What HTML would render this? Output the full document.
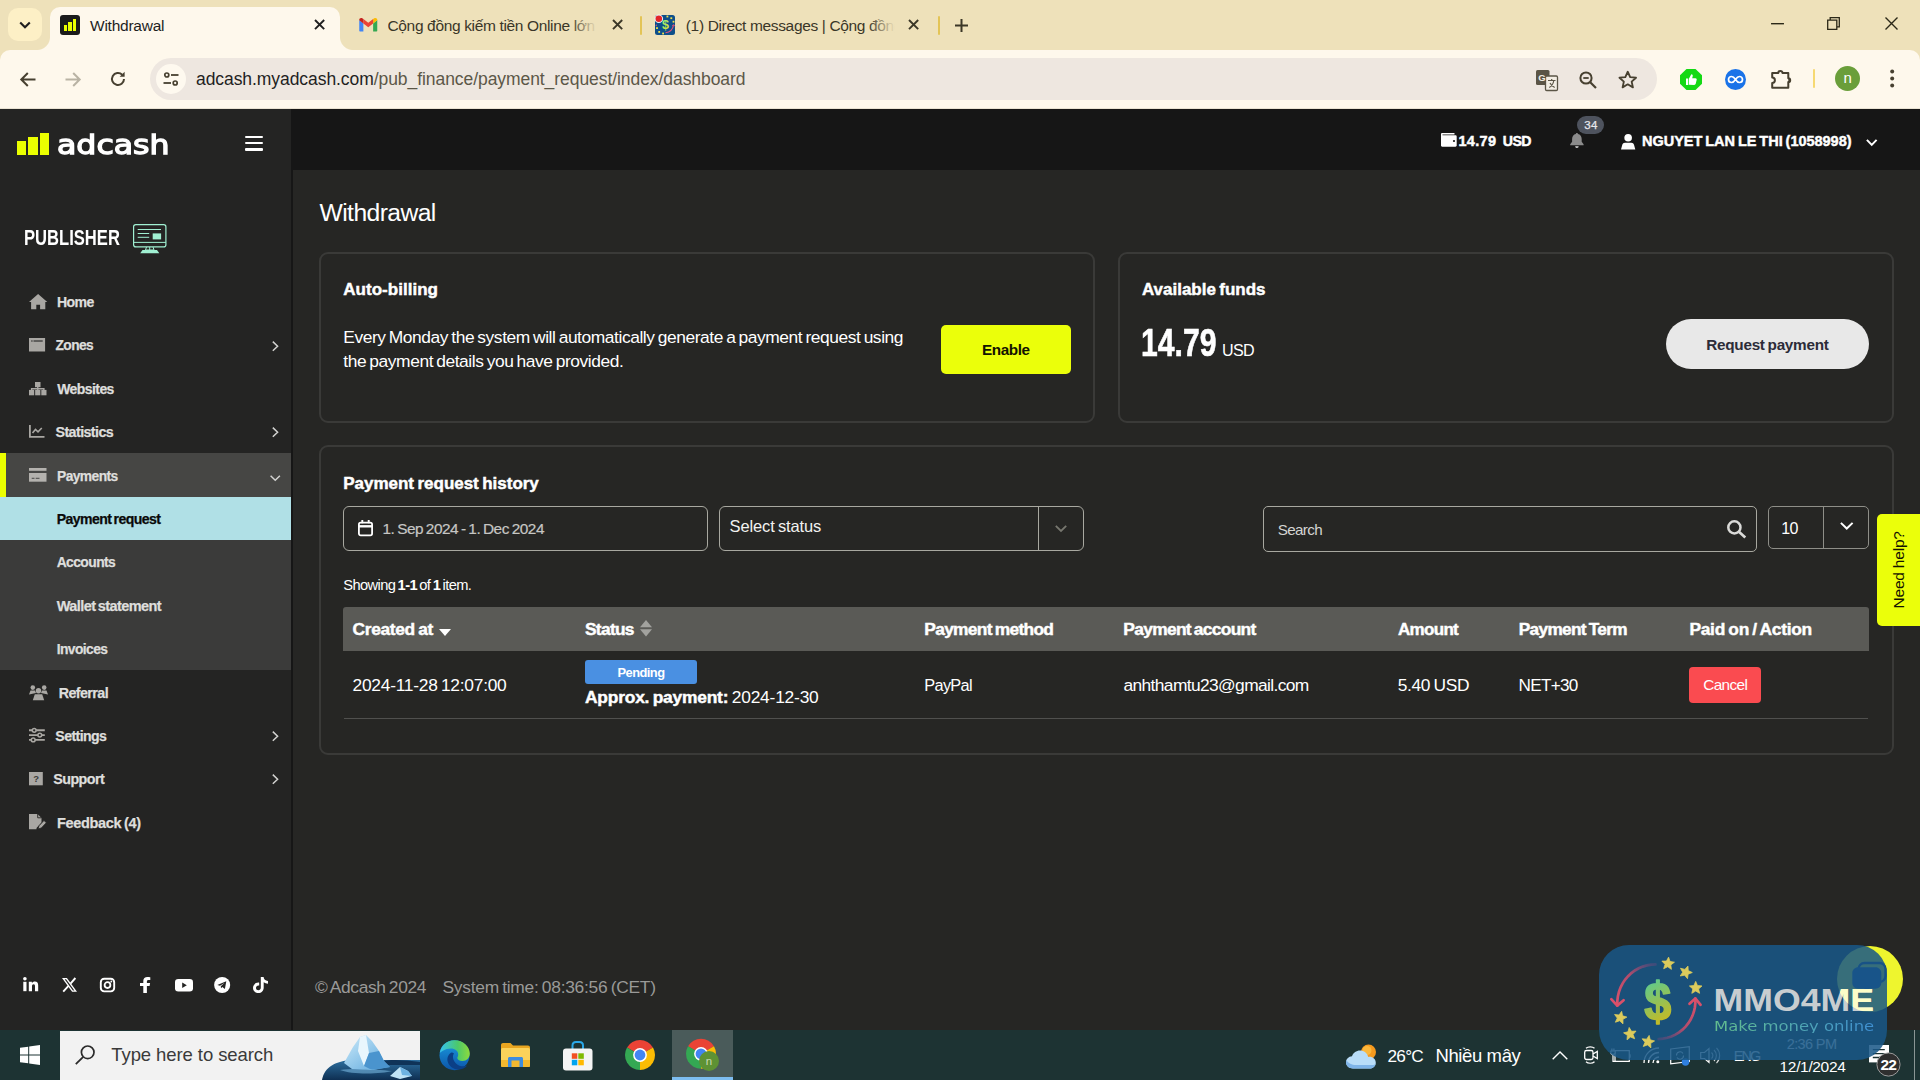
<!DOCTYPE html>
<html lang="en"><head><meta charset="utf-8"><title>Withdrawal</title>
<style>
*{margin:0;padding:0;box-sizing:border-box}
html,body{width:1920px;height:1080px;overflow:hidden;background:#262624}
body{position:relative;font-family:"Liberation Sans",sans-serif}
.b{position:absolute}
.t{position:absolute;white-space:pre;transform-origin:0 50%}
svg{position:absolute;overflow:visible}
</style></head>
<body>
<div class="b" style="left:0px;top:0px;width:1920px;height:62px;background:#EEE1BA;"></div>
<div class="b" style="left:8px;top:8px;width:34px;height:33px;background:#FDF0C6;border-radius:10px;"></div>
<div class="b" style="left:0px;top:50px;width:1920px;height:59px;background:#FEF8EC;border-radius:10px 10px 0 0;"></div>
<div class="b" style="left:0px;top:109px;width:291px;height:921px;background:#242423;"></div>
<div class="b" style="left:291px;top:109px;width:2px;height:921px;background:#161616;"></div>
<div class="b" style="left:293px;top:109px;width:1627px;height:921px;background:#262624;"></div>
<div class="b" style="left:50px;top:7px;width:290px;height:44px;background:#FEF8EC;border-radius:10px 10px 0 0;"></div>
<div class="b" style="left:37px;top:37px;width:13px;height:13px;background:radial-gradient(circle at 0 0, transparent 12.5px, #FEF8EC 13.5px);"></div>
<div class="b" style="left:340px;top:37px;width:13px;height:13px;background:radial-gradient(circle at 100% 0, transparent 12.5px, #FEF8EC 13.5px);"></div>
<div class="b" style="left:150px;top:58px;width:1507px;height:42px;background:#EEE7E0;border-radius:21px;"></div>
<div class="b" style="left:640px;top:16px;width:2px;height:19px;background:#E3C456;border-radius:1px;"></div>
<div class="b" style="left:938px;top:16px;width:2px;height:19px;background:#E3C456;border-radius:1px;"></div>
<div class="b" style="left:1813px;top:69px;width:2px;height:19px;background:#F6D972;border-radius:1px;"></div>
<div class="b" style="left:1835px;top:65.5px;width:25px;height:25px;background:#6A9E3A;border-radius:50%;"></div>
<div class="b" style="left:0px;top:108px;width:1920px;height:1px;background:#E9E2D2;"></div>
<div class="b" style="left:0px;top:453px;width:291px;height:44px;background:#464644;"></div>
<div class="b" style="left:0px;top:497px;width:291px;height:173px;background:#3B3B3A;"></div>
<div class="b" style="left:291px;top:109px;width:1629px;height:61px;background:#161616;"></div>
<div class="b" style="left:318.8px;top:251.8px;width:776px;height:171px;border:2px solid #3A3A38;border-radius:9px;"></div>
<div class="b" style="left:1117.8px;top:251.8px;width:776.3px;height:171px;border:2px solid #3A3A38;border-radius:9px;"></div>
<div class="b" style="left:318.8px;top:444.8px;width:1575.3px;height:310px;border:2px solid #3A3A38;border-radius:9px;"></div>
<div class="b" style="left:0px;top:1030px;width:1920px;height:50px;background:#1D3333;"></div>
<div class="b" style="left:156px;top:64px;width:30px;height:30px;background:#FEF9EF;border-radius:15px;"></div>
<div class="b" style="left:60px;top:15px;width:20px;height:20px;background:#1B1B1B;border-radius:3px;"></div>
<div class="b" style="left:655px;top:15px;width:20px;height:20px;background:#0E4F8A;border-radius:2.5px;"></div>
<div class="b" style="left:0px;top:453px;width:6px;height:44px;background:#EBFF00;"></div>
<div class="b" style="left:0px;top:497px;width:291px;height:43px;background:#B0E0E6;"></div>
<div class="b" style="left:17px;top:140.5px;width:9.4px;height:14.5px;background:#EBFF00;"></div>
<div class="b" style="left:28.3px;top:136.7px;width:9.7px;height:18.3px;background:#EBFF00;"></div>
<div class="b" style="left:40px;top:133px;width:9.4px;height:22px;background:#EBFF00;"></div>
<div class="b" style="left:244.5px;top:136px;width:18.5px;height:2.2px;background:#fff;border-radius:1px;"></div>
<div class="b" style="left:244.5px;top:142.2px;width:18.5px;height:2.2px;background:#fff;border-radius:1px;"></div>
<div class="b" style="left:244.5px;top:148.4px;width:18.5px;height:2.2px;background:#fff;border-radius:1px;"></div>
<div class="b" style="left:941px;top:325px;width:130.3px;height:49.3px;background:#EBFF0A;border-radius:5px;"></div>
<div class="b" style="left:1665.8px;top:318.8px;width:203.5px;height:50.5px;background:#E8E8E8;border-radius:26px;"></div>
<div class="b" style="left:343px;top:506.3px;width:365px;height:44.5px;border:1px solid #A8A8A0;border-radius:6px;"></div>
<div class="b" style="left:719.3px;top:506.3px;width:364.5px;height:44.5px;border:1px solid #A8A8A0;border-radius:6px;"></div>
<div class="b" style="left:1038px;top:507px;width:1px;height:43.5px;background:#A8A8A0;"></div>
<div class="b" style="left:1263px;top:506.3px;width:494px;height:45.5px;border:1px solid #A8A8A0;border-radius:5px;"></div>
<div class="b" style="left:1768px;top:506.3px;width:101px;height:42.5px;border:1px solid #8E8E88;border-radius:5px;"></div>
<div class="b" style="left:1823px;top:507px;width:1px;height:41px;background:#8E8E88;"></div>
<div class="b" style="left:343px;top:607px;width:1526px;height:44px;background:#5A5A56;border-radius:3px 3px 0 0;"></div>
<div class="b" style="left:344px;top:718px;width:1524px;height:1px;background:#50504E;"></div>
<div class="b" style="left:585px;top:660px;width:112px;height:24px;background:#4A90E2;border-radius:3px;"></div>
<div class="b" style="left:1689px;top:667.2px;width:72px;height:35.5px;background:#FA4B50;border-radius:4px;"></div>
<div class="b" style="left:60px;top:1030.5px;width:360px;height:49.5px;background:#F2F2F2;"></div>
<div class="b" style="left:672px;top:1030px;width:61px;height:50px;background:#4A5B5A;"></div>
<div class="b" style="left:64px;top:25px;width:3.4px;height:6px;background:#EBFF00;"></div>
<div class="b" style="left:68.4px;top:22px;width:3.4px;height:9px;background:#EBFF00;"></div>
<div class="b" style="left:72.8px;top:19px;width:3.4px;height:12px;background:#EBFF00;"></div>
<div class="b" style="left:1876.5px;top:514px;width:44px;height:112px;background:#EBFF0A;border-radius:5px 0 0 5px;"></div>
<div class="b" style="left:1577px;top:116.3px;width:27px;height:17.7px;background:#4E535E;border-radius:9px;"></div>
<div class="b" style="left:672px;top:1077px;width:61px;height:3px;background:#7DBDF0;"></div>
<div class="b" style="left:1914px;top:1030px;width:1px;height:50px;background:#8A9594;"></div>
<svg style="left:655px;top:15px" width="20" height="20" viewBox="0 0 20 20" ><defs><linearGradient id="fv" x1="0" y1="0" x2="1" y2="1"><stop offset="0" stop-color="#7CF09A"/><stop offset="1" stop-color="#F0E018"/></linearGradient></defs><text x="10.400" y="14" text-anchor="middle" font-family="Liberation Sans,sans-serif" font-weight="700" font-size="12.500" fill="url(#fv)">$</text><rect x="11.500" y=".6" width="1.800" height="1.800" fill="#F2E14A"/><rect x="15.400" y="2.300" width="1.800" height="1.800" fill="#F2E14A"/><rect x="17.600" y="5.800" width="1.800" height="1.800" fill="#F2E14A"/><rect x="1.100" y="12.200" width="1.800" height="1.800" fill="#F2E14A"/><rect x="3.300" y="16" width="1.800" height="1.800" fill="#F2E14A"/><rect x="7.200" y="17.600" width="1.800" height="1.800" fill="#F2E14A"/><path d="M10.500 17.800C14.500 17.300 17.800 14.500 18.500 10.200" stroke="#E0507A" stroke-width="1.100" fill="none"/><path d="M17.300 11L18.600 9.600L19.700 11.200" stroke="#E0507A" stroke-width="1" fill="none"/><path d="M.3 10.200L1.800 9.200V11.400Z" fill="#E0507A"/><circle cx="3.800" cy="3.800" r="4.300" fill="#EEF4F8"/><circle cx="3.800" cy="3.800" r="3.300" fill="#E22428"/></svg>
<svg style="left:322px;top:1033px" width="98" height="47" viewBox="0 0 98 47" ><defs><linearGradient id="ice" x1="0" y1="0" x2="1" y2="1"><stop offset="0" stop-color="#CDEBFA"/><stop offset="1" stop-color="#5AA6DC"/></linearGradient><linearGradient id="sea" x1="0" y1="0" x2="0" y2="1"><stop offset="0" stop-color="#2C6E9E"/><stop offset="1" stop-color="#0E2F52"/></linearGradient></defs><path d="M0 47C2 34 14 28 30 27H98V47Z" fill="url(#sea)"/><path d="M60 28C70 26 85 27 98 29V32H60Z" fill="#0F3358"/><path d="M22 30L31 14L38 4L44 2L50 8L57 18L62 28L68 34L50 37L30 36Z" fill="url(#ice)"/><path d="M38 4L44 2L47 20L42 33L36 18Z" fill="#E8F6FD"/><path d="M47 20L57 18L62 28L68 34L50 37L42 33Z" fill="#4A94CE"/><path d="M68 43L78 34L86 38L90 43L78 46Z" fill="#BFE3F7"/><path d="M78 34L86 38L90 43L80 42Z" fill="#6DB2E2"/><path d="M18 37C30 35 55 36 70 38C60 41 30 42 18 37Z" fill="#7FC0E8" opacity=".55"/></svg>
<svg style="left:19px;top:21px" width="12" height="8" viewBox="0 0 12 8" ><path d="M1.2 1.4L6 6.2L10.8 1.4" stroke="#1f1f1f" stroke-width="2.1" fill="none"/></svg>
<svg style="left:954.5px;top:18.5px" width="13" height="13" viewBox="0 0 13 13" ><path d="M6.5 0V13M0 6.5H13" stroke="#3b3727" stroke-width="2" fill="none"/></svg>
<svg style="left:358.5px;top:17.8px" width="18.5" height="13.5" viewBox="0 0 24 18" ><path d="M0 2.5V17a1 1 0 0 0 1 1h4.5V7.2z" fill="#4285F4"/><path d="M24 2.5V17a1 1 0 0 1-1 1h-4.5V7.2z" fill="#34A853"/><path d="M18.5 1.2V7.2L24 3V2.3C24 .2 21.6-.8 20 .4z" fill="#FBBC04"/><path d="M5.500 7.2V1.2L12 6.2l6.500-5v6L12 12.200z" fill="#EA4335"/><path d="M0 2.300V3l5.500 4.200V1.200L4 .4C2.400-.8 0 .2 0 2.300z" fill="#C5221F"/></svg>
<svg style="left:1771px;top:23.3px" width="13" height="1.4" viewBox="0 0 13 1.4" ><rect width="13" height="1.4" fill="#2b2818"/></svg>
<svg style="left:1827px;top:17.2px" width="13" height="13" viewBox="0 0 13 13" ><path d="M.7 3.200h9.100v9.100H.7zM3.200 3V.7h9.100v9.100H10" stroke="#2b2818" stroke-width="1.300" fill="none"/></svg>
<svg style="left:1884.5px;top:17.3px" width="13" height="13" viewBox="0 0 13 13" ><path d="M.5 .5L12.500 12.500M12.500 .5L.5 12.500" stroke="#2b2818" stroke-width="1.400" fill="none"/></svg>
<svg style="left:19.5px;top:71.5px" width="16" height="15" viewBox="0 0 16 15" ><path d="M15.500 7.500H1.800M7.800 1L1.300 7.500L7.800 14" stroke="#474030" stroke-width="2" fill="none"/></svg>
<svg style="left:64.5px;top:71.5px" width="16" height="15" viewBox="0 0 16 15" ><path d="M.5 7.500H14.200M8.200 1L14.700 7.500L8.200 14" stroke="#B9B3A4" stroke-width="2" fill="none"/></svg>
<svg style="left:109.5px;top:71px" width="16" height="16" viewBox="0 0 16 16" ><path d="M14 8a6 6 0 1 1-1.800-4.300" stroke="#474030" stroke-width="2" fill="none"/><path d="M14.600 .8V5.800H9.600z" fill="#474030"/></svg>
<svg style="left:163px;top:72px" width="16" height="14" viewBox="0 0 16 14" ><circle cx="3.800" cy="3" r="2" stroke="#474030" stroke-width="1.700" fill="none"/><path d="M8 3H15.500" stroke="#474030" stroke-width="1.800"/><circle cx="12.200" cy="11" r="2" stroke="#474030" stroke-width="1.700" fill="none"/><path d="M.5 11H8" stroke="#474030" stroke-width="1.800"/></svg>
<svg style="left:1536px;top:69.5px" width="22" height="21" viewBox="0 0 22 21" ><rect x="0" y="0" width="13.500" height="15" rx="1.500" fill="#5B5546"/><rect x="9.500" y="6" width="12" height="14.500" rx="1.200" fill="#F3EEE4" stroke="#5B5546" stroke-width="1.300"/><path d="M12 10.500h7.500M15.700 9v1.500M13.300 17.500c2.500-1.500 4-4 4.500-7M14 13c1 2 2.500 3.500 4.700 4.500" stroke="#5B5546" stroke-width="1.200" fill="none"/><text x="2.200" y="11.300" font-family="Liberation Sans,sans-serif" font-weight="700" font-size="9.500" fill="#F3EEE4">G</text></svg>
<svg style="left:1578.5px;top:70.5px" width="18" height="18" viewBox="0 0 18 18" ><circle cx="7" cy="7" r="5.600" stroke="#474030" stroke-width="2" fill="none"/><path d="M11.200 11.200L17 17" stroke="#474030" stroke-width="2.200"/><path d="M4.300 7H9.700" stroke="#474030" stroke-width="1.800"/></svg>
<svg style="left:1618px;top:69.5px" width="19.5" height="18.5" viewBox="0 0 20 19" ><path d="M10 1.800L12.500 7.300L18.500 7.900L14 11.900L15.300 17.800L10 14.700L4.700 17.800L6 11.900L1.500 7.900L7.500 7.300Z" stroke="#474030" stroke-width="1.900" fill="none" stroke-linejoin="round"/></svg>
<svg style="left:1679.5px;top:68.5px" width="22" height="21" viewBox="0 0 22 21" ><path d="M6.500 0H15.500L22 6.200V14.800L15.500 21H6.500L0 14.800V6.200Z" fill="#14D914"/><path d="M6 9.500h2.300v6.500H6zM9 15.800V9.600l2.300-4.400c1.100 0 1.700.9 1.400 2l-.5 2h3.300c.9 0 1.400.8 1.200 1.600l-1 4c-.2.700-.8 1.200-1.500 1.200z" fill="#fff"/></svg>
<svg style="left:1725px;top:68.5px" width="21" height="21" viewBox="0 0 21 21" ><circle cx="10.500" cy="10.500" r="10.500" fill="#1A73E8"/><path d="M10.500 10.500c-1.500-2.300-2.600-3-4-3a3 3 0 0 0 0 6c1.400 0 2.500-.7 4-3zm0 0c1.500 2.300 2.600 3 4 3a3 3 0 0 0 0-6c-1.400 0-2.500.7-4 3z" stroke="#fff" stroke-width="1.700" fill="none"/></svg>
<svg style="left:1771px;top:68.5px" width="21" height="20" viewBox="0 0 21 20" ><path d="M1.200 4H7.300A2.100 2.100 0 0 1 11.500 4H17.300V9.300A1.900 1.900 0 0 1 17.300 13.100V18.800H1.200V13.900A2.700 2.700 0 0 0 1.200 8.500Z" stroke="#474030" stroke-width="2" fill="none" stroke-linejoin="round"/><path d="M17.300 9.300A1.900 1.900 0 0 1 17.300 13.100Z" fill="#474030"/></svg>
<svg style="left:1890.2px;top:69.3px" width="4.4" height="19" viewBox="0 0 4.400 19" ><circle cx="2.200" cy="2.400" r="2" fill="#474030"/><circle cx="2.200" cy="9.500" r="2" fill="#474030"/><circle cx="2.200" cy="16.600" r="2" fill="#474030"/></svg>
<svg style="left:132.8px;top:223.8px" width="33.5" height="29.5" viewBox="0 0 33.5 29.5" ><rect x=".6" y=".6" width="32.300" height="22.300" rx="2.200" stroke="#A0F0D2" stroke-width="1.200" fill="none"/><path d="M.6 18.400H32.900" stroke="#A0F0D2" stroke-width="1"/><path d="M4.700 5.500H28M4.700 9.500H16.200M4.700 13.300H16.200" stroke="#A0F0D2" stroke-width="1"/><rect x="19.700" y="9.400" width="8.400" height="6" fill="#A0F0D2"/><path d="M13.500 23L12.500 26H21L20 23M16.700 23V26" stroke="#A0F0D2" stroke-width="1" fill="none"/><path d="M9.500 26H24L26.300 29.300H7.200Z" fill="#A0F0D2"/></svg>
<svg style="left:28.8px;top:293.7px" width="18.3" height="15.3" viewBox="0 0 18.3 15.3" ><path d="M9.100 0L18.300 8H16.300V15.300H11.100V10.700H7.300V15.300H2.100V8H0Z" fill="#A9A7A3"/></svg>
<svg style="left:29px;top:337.5px" width="16.1" height="13.5" viewBox="0 0 16.1 13.5" ><path d="M0 0H16.100V13.500H0Z" fill="#A9A7A3"/><path d="M4.500 3H13.700" stroke="#242423" stroke-width="1.100"/><rect x="2.200" y="2.450" width="1.400" height="1.100" fill="#242423"/></svg>
<svg style="left:29.2px;top:381.7px" width="17.5" height="13.3" viewBox="0 0 17.5 13.3" ><rect x="6" y="0" width="5.500" height="5.200" fill="#A9A7A3"/><path d="M8.750 5V8M2.600 8.500V6.700H14.900V8.500" stroke="#A9A7A3" stroke-width="1.400" fill="none"/><rect x="0" y="7.900" width="5.200" height="5.400" fill="#A9A7A3"/><rect x="6.150" y="7.900" width="5.200" height="5.400" fill="#A9A7A3"/><rect x="12.300" y="7.900" width="5.200" height="5.400" fill="#A9A7A3"/></svg>
<svg style="left:29.2px;top:424.7px" width="15.5" height="12.8" viewBox="0 0 15.5 12.8" ><path d="M.9 0V11.900H15.500" stroke="#A9A7A3" stroke-width="1.800" fill="none"/><path d="M3.500 8L6.500 4.500L9 6.800L12.800 3" stroke="#A9A7A3" stroke-width="1.600" fill="none"/></svg>
<svg style="left:29.2px;top:468.3px" width="17.5" height="13.7" viewBox="0 0 17.5 13.7" ><rect x="0" y="0" width="17.500" height="2.800" fill="#B4B2AE"/><rect x="0" y="5" width="17.500" height="8.700" fill="#B4B2AE"/><path d="M2.700 10.300H5.500M6.700 10.300H10.500" stroke="#464644" stroke-width="1"/></svg>
<svg style="left:29.2px;top:684.7px" width="19" height="15.3" viewBox="0 0 19 15.3" ><circle cx="3.800" cy="2.600" r="2.300" fill="#A9A7A3"/><circle cx="15.200" cy="2.600" r="2.300" fill="#A9A7A3"/><path d="M0 9.500L1.500 5.500H6L7 8M19 9.500L17.500 5.500H13L12 8" fill="#A9A7A3"/><circle cx="9.500" cy="5.800" r="2.700" fill="#A9A7A3"/><path d="M3.800 15.300L5.800 9.300H13.200L15.200 15.300Z" fill="#A9A7A3"/></svg>
<svg style="left:29.2px;top:728.3px" width="15.8" height="14.2" viewBox="0 0 15.8 14.2" ><path d="M0 2.300H15.800M0 7.100H15.800M0 11.900H15.800" stroke="#A9A7A3" stroke-width="1.900"/><circle cx="5.200" cy="2.300" r="1.900" fill="#242423" stroke="#A9A7A3" stroke-width="1.500"/><circle cx="10.800" cy="7.100" r="1.900" fill="#242423" stroke="#A9A7A3" stroke-width="1.500"/><circle cx="4.200" cy="11.900" r="1.900" fill="#242423" stroke="#A9A7A3" stroke-width="1.500"/></svg>
<svg style="left:29.2px;top:771.7px" width="13.8" height="13.3" viewBox="0 0 13.8 13.3" ><rect width="13.800" height="13.300" fill="#A9A7A3"/><text x="4.300" y="10.500" font-family="Liberation Sans,sans-serif" font-weight="700" font-size="9.500" fill="#3a3a38">?</text></svg>
<svg style="left:28.8px;top:814px" width="17.5" height="16" viewBox="0 0 17.5 16" ><path d="M0 0H8.500L12.500 4V8.500L7.500 14V15.200H0Z" fill="#A9A7A3"/><path d="M8.700 0V3.800H12.500" stroke="#242423" stroke-width=".9" fill="none"/><path d="M9.200 14.800L10 11.800L15 6.500L17.300 8.700L12.300 14Z" fill="#A9A7A3" stroke="#242423" stroke-width=".7"/></svg>
<svg style="left:272px;top:341.3px" width="6.5" height="10.4" viewBox="0 0 6.5 10.4" ><path d="M.8 .6L5.600 5.200L.8 9.800" stroke="#D2D2D0" stroke-width="1.500" fill="none"/></svg>
<svg style="left:272px;top:427.3px" width="6.5" height="10.4" viewBox="0 0 6.5 10.4" ><path d="M.8 .6L5.600 5.200L.8 9.800" stroke="#D2D2D0" stroke-width="1.500" fill="none"/></svg>
<svg style="left:272px;top:731.3px" width="6.5" height="10.4" viewBox="0 0 6.5 10.4" ><path d="M.8 .6L5.600 5.200L.8 9.800" stroke="#D2D2D0" stroke-width="1.500" fill="none"/></svg>
<svg style="left:272px;top:774.3px" width="6.5" height="10.4" viewBox="0 0 6.5 10.4" ><path d="M.8 .6L5.600 5.200L.8 9.800" stroke="#D2D2D0" stroke-width="1.500" fill="none"/></svg>
<svg style="left:270.3px;top:475px" width="10.5" height="6.2" viewBox="0 0 10.5 6.2" ><path d="M.6 .7L5.250 5.300L9.900 .7" stroke="#D2D2D0" stroke-width="1.500" fill="none"/></svg>
<svg style="left:22.8px;top:976.7px" width="15.2" height="14.2" viewBox="0 0 15.2 14.2" ><circle cx="1.900" cy="1.800" r="1.800" fill="#fff"/><rect x=".3" y="4.800" width="3.200" height="9.400" fill="#fff"/><path d="M5.800 4.800H8.900V6.100C9.500 5.100 10.600 4.500 11.900 4.500C14.300 4.500 15.200 6 15.200 8.500V14.200H12V9.200C12 8 11.700 7.200 10.600 7.200S9 8 9 9.200V14.200H5.800Z" fill="#fff"/></svg>
<svg style="left:61.7px;top:978px" width="15" height="13.7" viewBox="0 0 15 13.7" ><path d="M0 0H4.900L15 13.700H10.100Z" fill="#fff"/><path d="M2.600 1.200H4.100L12.400 12.500H10.900Z" fill="#242423"/><path d="M13.400 0L8.500 5.600M6.500 7.900L1.200 13.700" stroke="#fff" stroke-width="1.900"/></svg>
<svg style="left:99.7px;top:977.5px" width="15" height="14.2" viewBox="0 0 15 14.2" ><rect x=".8" y=".8" width="13.400" height="12.600" rx="3.400" stroke="#fff" stroke-width="1.900" fill="none"/><circle cx="7.500" cy="7.100" r="2.900" stroke="#fff" stroke-width="1.800" fill="none"/><circle cx="11.300" cy="3.500" r=".9" fill="#fff"/></svg>
<svg style="left:139.7px;top:976.7px" width="11.1" height="16.1" viewBox="0 0 11.1 16.1" ><path d="M3.300 16.100V9.100H0V6.100H3.300V4C3.300 1.300 4.900 0 7.400 0C8.600 0 9.800 .2 10.300 .3V3H8.700C7.300 3 6.900 3.700 6.900 4.600V6.100H10.100L9.600 9.100H6.900V16.100Z" fill="#fff"/></svg>
<svg style="left:175px;top:978.7px" width="18" height="12.5" viewBox="0 0 18 12.5" ><rect width="18" height="12.500" rx="3.300" fill="#fff"/><path d="M7.200 3.600V8.900L11.800 6.250Z" fill="#242423"/></svg>
<svg style="left:213.7px;top:976.7px" width="16.3" height="16.1" viewBox="0 0 16.3 16.1" ><circle cx="8.150" cy="8.050" r="8.050" fill="#fff"/><path d="M3.300 8L12.300 4.300L10.900 11.900L8.300 10L7 11.300L6.800 9.200L10.600 5.700L6 8.700Z" fill="#242423"/></svg>
<svg style="left:252.5px;top:976.7px" width="15" height="16.1" viewBox="0 0 15 16.1" ><path d="M7.800 0H10.600C10.700 2 12.300 3.800 15 3.900V6.700C13.300 6.700 11.800 6.200 10.700 5.300V10.800C10.700 13.800 8.400 16.100 5.400 16.100S0 13.800 0 10.900S2.400 5.600 5.400 5.600C5.700 5.600 6 5.600 6.200 5.700V8.600C6 8.500 5.700 8.500 5.400 8.500C4.100 8.500 3 9.600 3 10.900S4.100 13.200 5.400 13.200S7.800 12.200 7.800 10.800Z" fill="#fff"/></svg>
<svg style="left:1440.8px;top:133.3px" width="15.7" height="13.7" viewBox="0 0 15.7 13.7" ><path d="M0 1.200C0 .5 .5 0 1.200 0H13.500V1.600H1.500V2.300H14.500C15.200 2.300 15.700 2.800 15.700 3.500V12.500C15.700 13.200 15.200 13.700 14.500 13.700H1.200C.5 13.700 0 13.200 0 12.500Z" fill="#fff"/><circle cx="13" cy="8" r="1.100" fill="#171717"/></svg>
<svg style="left:1569.7px;top:132.7px" width="13.8" height="15.2" viewBox="0 0 13.8 15.2" ><path d="M6.900 0C7.500 0 8 .5 8 1.100C10.300 1.600 11.700 3.500 11.700 6V8.800L13.600 11.200V12.300H.2V11.200L2.100 8.800V6C2.100 3.500 3.500 1.600 5.800 1.100C5.800 .5 6.300 0 6.900 0Z" fill="#8B8B8B"/><path d="M5.100 13.300H8.700A1.800 1.800 0 0 1 5.100 13.300Z" fill="#D8D8D8"/></svg>
<svg style="left:1620.5px;top:133.5px" width="14.3" height="15.5" viewBox="0 0 14.3 15.5" ><circle cx="7.150" cy="3.800" r="3.800" fill="#fff"/><path d="M0 15.500L1.300 10.800C1.600 9.600 2.700 8.800 3.900 8.800H10.400C11.600 8.800 12.700 9.600 13 10.800L14.300 15.500Z" fill="#fff"/></svg>
<svg style="left:1866px;top:138.5px" width="11.5" height="7.3" viewBox="0 0 11.5 7.3" ><path d="M.9 .9L5.750 5.900L10.600 .9" stroke="#fff" stroke-width="2" fill="none"/></svg>
<svg style="left:357.5px;top:520px" width="15" height="16.3" viewBox="0 0 15 16.3" ><rect x=".9" y="2.700" width="13.200" height="12.700" rx="1.800" stroke="#fff" stroke-width="1.800" fill="none"/><path d="M.9 6.300H14.100" stroke="#fff" stroke-width="2.400"/><path d="M4.300 0V3.200M10.700 0V3.200" stroke="#fff" stroke-width="1.900"/></svg>
<svg style="left:1055px;top:525px" width="12" height="7" viewBox="0 0 12 7" ><path d="M.8 .8L6 6L11.200 .8" stroke="#77776F" stroke-width="1.800" fill="none"/></svg>
<svg style="left:1726.9px;top:520.4px" width="19.2" height="18.2" viewBox="0 0 19.2 18.2" ><circle cx="7.400" cy="7.400" r="6.100" stroke="#DADAD8" stroke-width="2.500" fill="none"/><path d="M11.900 11.700L18.300 17.400" stroke="#DADAD8" stroke-width="2.700"/></svg>
<svg style="left:1840.3px;top:521.9px" width="13.5" height="7.8" viewBox="0 0 13.5 7.8" ><path d="M.9 .9L6.750 6.500L12.600 .9" stroke="#fff" stroke-width="2" fill="none"/></svg>
<svg style="left:438.8px;top:629.3px" width="12" height="7" viewBox="0 0 12 7" ><path d="M0 0H12L6 7Z" fill="#fff"/></svg>
<svg style="left:640px;top:620px" width="12" height="16.5" viewBox="0 0 12 16.5" ><path d="M0 7.200H12L6 0Z" fill="#A2A29E"/><path d="M0 9.300H12L6 16.500Z" fill="#A2A29E"/></svg>
<svg style="left:20px;top:1045px" width="20" height="20" viewBox="0 0 20 20" ><path d="M0 2.800L8.200 1.700V9.500H0ZM9.200 1.500L20 0V9.500H9.200ZM0 10.500H8.200V18.300L0 17.200ZM9.200 10.500H20V20L9.200 18.500Z" fill="#fff"/></svg>
<svg style="left:75px;top:1045px" width="20" height="20" viewBox="0 0 20 20" ><circle cx="12.700" cy="7.300" r="6.300" stroke="#2a2a2a" stroke-width="1.700" fill="none"/><path d="M8.200 11.800L.8 19.200" stroke="#2a2a2a" stroke-width="1.800"/></svg>
<svg style="left:438.8px;top:1040px" width="31" height="30.5" viewBox="0 0 31 30.5" ><defs><linearGradient id="eg1" x1="0" y1="0" x2="1" y2="0"><stop offset="0" stop-color="#35C1F1"/><stop offset=".6" stop-color="#4CC96A"/><stop offset="1" stop-color="#8EDB3C"/></linearGradient><linearGradient id="eg2" x1="0" y1="0" x2="0" y2="1"><stop offset="0" stop-color="#1B9DE2"/><stop offset="1" stop-color="#0C55A8"/></linearGradient></defs><circle cx="15.500" cy="15.200" r="15" fill="url(#eg2)"/><path d="M.8 13C2 5 8 .2 15.500 .2C24 .2 30.800 6.500 30.800 13.500C30.800 18 27.500 21 23.500 21C20 21 18.300 19.500 18.300 18C18.300 17 19.200 16.500 19.200 14.500C19.200 11 16 8.500 12 8.500C6 8.500 1.500 12 .8 13Z" fill="url(#eg1)"/><path d="M12.500 12.500C9 14.500 7.500 18.500 9 22.500C10.500 26.500 14.500 29.500 19.500 29.500C23 29.500 26 28 28.300 25.500C25 27 20 26.500 17 23.500C14 20.500 13 16 15 13.500C14.200 12.700 13.300 12.400 12.500 12.500Z" fill="#0B3F86"/></svg>
<svg style="left:501.3px;top:1042.5px" width="29" height="24" viewBox="0 0 29 24" ><path d="M0 2C0 .9 .9 0 2 0H9.500L12 2.500H27C28.100 2.500 29 3.400 29 4.500V8H0Z" fill="#E8A520"/><rect x="0" y="5" width="29" height="19" rx="1.500" fill="#FBD25A"/><path d="M0 17H29V22.500C29 23.300 28.300 24 27.500 24H1.500C.7 24 0 23.300 0 22.500Z" fill="#F3B82E"/><path d="M7 24V15.500C7 14.700 7.700 14 8.500 14H20.500C21.300 14 22 14.700 22 15.500V24H18.500V17.500H10.500V24Z" fill="#3C8CE0"/></svg>
<svg style="left:562.5px;top:1040.5px" width="29.5" height="29.5" viewBox="0 0 29.5 29.5" ><path d="M9.500 8V4.500C9.500 2.500 11 1 13 1H16.500C18.500 1 20 2.500 20 4.500V8" stroke="#2AA8E8" stroke-width="2" fill="none"/><rect x="0" y="7.500" width="29.500" height="22" rx="3" fill="#F4F4F4"/><rect x="8.800" y="12.300" width="5.500" height="5.500" fill="#F25022"/><rect x="15.300" y="12.300" width="5.500" height="5.500" fill="#7FBA00"/><rect x="8.800" y="18.800" width="5.500" height="5.500" fill="#00A4EF"/><rect x="15.300" y="18.800" width="5.500" height="5.500" fill="#FFB900"/></svg>
<svg style="left:0;top:0" width="1920" height="1080" viewBox="0 0 1920 1080"><path d="M640 1055L627.01 1047.50A15 15 0 0 1 652.99 1047.50Z" fill="#EA4335"/><path d="M640 1055L652.99 1047.50A15 15 0 0 1 640.00 1070.00Z" fill="#FBBC04"/><path d="M640 1055L640.00 1070.00A15 15 0 0 1 627.01 1047.50Z" fill="#34A853"/><circle cx="640" cy="1055" r="6.90" fill="#fff"/><circle cx="640" cy="1055" r="5.40" fill="#4285F4"/></svg>
<svg style="left:0;top:0" width="1920" height="1080" viewBox="0 0 1920 1080"><path d="M701 1053.8L688.01 1046.30A15 15 0 0 1 713.99 1046.30Z" fill="#EA4335"/><path d="M701 1053.8L713.99 1046.30A15 15 0 0 1 701.00 1068.80Z" fill="#FBBC04"/><path d="M701 1053.8L701.00 1068.80A15 15 0 0 1 688.01 1046.30Z" fill="#34A853"/><circle cx="701" cy="1053.8" r="6.90" fill="#fff"/><circle cx="701" cy="1053.8" r="5.40" fill="#4285F4"/></svg>
<svg style="left:1346.3px;top:1043.8px" width="31.5" height="24.5" viewBox="0 0 31.5 24.5" ><circle cx="22.500" cy="8" r="7.500" fill="#F59A1E"/><circle cx="21" cy="6.500" r="4.500" fill="#FBB83C"/><path d="M7 24.500C3 24.500 0 21.800 0 18.300C0 15 2.600 12.400 6 12.200C7.200 8.800 10.300 6.500 14 6.500C18 6.500 21.300 9.200 22.200 12.900C22.600 12.800 23 12.800 23.500 12.800C27 12.800 29.800 15.400 29.800 18.700C29.800 21.900 27.200 24.500 23.800 24.500Z" fill="#B9DDF8"/><path d="M7 24.500C3 24.500 0 21.800 0 18.300C0 17.500 .2 16.700 .5 16C2 19.500 6 21 10 21H26.500C27.800 21 28.900 20.500 29.600 19.700C29.100 22.400 26.700 24.500 23.800 24.500Z" fill="#7FB4E8"/></svg>
<svg style="left:1552px;top:1050.5px" width="16" height="9" viewBox="0 0 16 9" ><path d="M.7 8.300L8 1L15.300 8.300" stroke="#fff" stroke-width="1.400" fill="none"/></svg>
<svg style="left:1583.8px;top:1045.8px" width="14" height="18" viewBox="0 0 14 18" ><rect x=".7" y="4.500" width="8.300" height="9" rx="1.800" stroke="#fff" stroke-width="1.300" fill="none"/><path d="M9 8L13.300 5.500V12.500L9 10" stroke="#fff" stroke-width="1.300" fill="none"/><path d="M2 2.200C4 .3 8.500 .3 10.500 2.200M2 15.800C4 17.700 8.500 17.700 10.500 15.800" stroke="#fff" stroke-width="1.200" fill="none"/></svg>
<svg style="left:1609.5px;top:1047.5px" width="21.5" height="14" viewBox="0 0 21.5 14" ><path d="M5 2.600H19.300V13.300H5Z" stroke="#fff" stroke-width="1.200" fill="none"/><rect x="19.300" y="6.300" width="1.300" height="3.400" fill="#fff"/><path d="M.8 3H5.200V4.500C5.200 5.800 4.200 6.400 3 6.400S.8 5.800 .8 4.500Z" fill="#1D3333" stroke="#fff" stroke-width="1.100"/><path d="M1.900 .6V3M3.900 .6V3M3 6.400V13.300H5.500" stroke="#fff" stroke-width="1.200" fill="none"/></svg>
<svg style="left:1642.5px;top:1046.5px" width="16.5" height="16.5" viewBox="0 0 16.5 16.5" ><path d="M1 16A15 15 0 0 1 16 1M5.500 16A10.500 10.500 0 0 1 16 5.500M10 16A6 6 0 0 1 16 10" stroke="#fff" stroke-width="1.300" fill="none"/><circle cx="14.800" cy="14.800" r="1.500" fill="#fff"/></svg>
<svg style="left:1670px;top:1045.5px" width="20" height="18.5" viewBox="0 0 20 18.5" ><path d="M.7 3L19.300 .7V15.500L.7 17.800Z" stroke="#fff" stroke-width="1.200" fill="none"/><path d="M6.500 9.500A3.500 3.500 0 0 1 13 7.500M13.500 9.500A3.500 3.500 0 0 1 7 11.500" stroke="#fff" stroke-width="1.100" fill="none"/><circle cx="15.500" cy="16" r="3.700" fill="#2F7FE0"/></svg>
<svg style="left:1700px;top:1046.5px" width="20" height="17" viewBox="0 0 20 17" ><path d="M.7 5.500H4.500L9 1.500V15.500L4.500 11.500H.7Z" stroke="#fff" stroke-width="1.200" fill="none"/><path d="M11.500 5.500A4 4 0 0 1 11.500 11.500M14 3A7.500 7.500 0 0 1 14 14M16.500 .8A11 11 0 0 1 16.500 16.200" stroke="#fff" stroke-width="1.100" fill="none" opacity=".85"/></svg>
<svg style="left:698.8px;top:1051.3px" width="20" height="20" viewBox="0 0 20 20" ><circle cx="10" cy="10" r="10" fill="#5E9234"/><text x="10" y="14" text-anchor="middle" font-family="Liberation Sans,sans-serif" font-size="11.500" fill="#C8D8B4">n</text></svg>
<svg style="left:1869.2px;top:1044.6px" width="20" height="17.4" viewBox="0 0 20 17.4" ><path d="M0 0H20V17.400H0Z" fill="#fff"/><path d="M3.800 4.600H15.800M3.800 8.600H15.800M3.800 12.500H12" stroke="#1D3333" stroke-width="1.300"/></svg>
<span class="t" style="left:90px;top:18.11px;font-size:15.5px;line-height:15.5px;height:15.5px;color:#1f1f1f;letter-spacing:-0.241px;">Withdrawal</span>
<span class="t" style="left:387.5px;top:18.11px;font-size:15.5px;line-height:15.5px;height:15.5px;color:#3A3628;letter-spacing:-0.35px;width:211px;overflow:hidden;">Cộng đồng kiếm tiền Online lớn nhất</span>
<span class="t" style="left:685.8px;top:18.11px;font-size:15.5px;line-height:15.5px;height:15.5px;color:#3A3628;letter-spacing:-0.35px;width:211px;overflow:hidden;">(1) Direct messages | Cộng đồng kiếm tiền</span>
<span class="t" style="left:196px;top:71.10px;font-size:17.5px;line-height:17.5px;height:17.5px;color:#1f1f1f;letter-spacing:-0.066px;">adcash.myadcash.com<span style="color:#5C5748">/pub_finance/payment_request/index/dashboard</span></span>
<span class="t" style="left:1843.4px;top:70.11px;font-size:15px;line-height:15px;height:15px;color:#fff;">n</span>
<span class="t" style="left:57.0px;top:132.12px;font-size:26.6px;line-height:26.6px;height:26.6px;color:#fff;font-family:'DejaVu Sans','Liberation Sans',sans-serif;transform:scaleX(1.1876);-webkit-text-stroke:1.3px #fff;">adcash</span>
<span class="t" style="left:23.8px;top:226.11px;font-size:22.8px;line-height:22.8px;height:22.8px;color:#fff;font-weight:700;transform:scaleX(0.7280);">PUBLISHER</span>
<span class="t" style="left:57px;top:295.10px;font-size:14.08px;line-height:14.08px;height:14.08px;color:#DEDEDC;font-weight:700;letter-spacing:-0.580px;-webkit-text-stroke:.25px currentColor;">Home</span>
<span class="t" style="left:55.5px;top:339.10px;font-size:13.79px;line-height:13.79px;height:13.79px;color:#DEDEDC;font-weight:700;letter-spacing:-0.580px;-webkit-text-stroke:.25px currentColor;">Zones</span>
<span class="t" style="left:57.2px;top:382.10px;font-size:14.03px;line-height:14.03px;height:14.03px;color:#DEDEDC;font-weight:700;letter-spacing:-0.580px;-webkit-text-stroke:.25px currentColor;">Websites</span>
<span class="t" style="left:55.5px;top:425.11px;font-size:14.28px;line-height:14.28px;height:14.28px;color:#DEDEDC;font-weight:700;letter-spacing:-0.580px;-webkit-text-stroke:.25px currentColor;">Statistics</span>
<span class="t" style="left:57px;top:470.12px;font-size:13.83px;line-height:13.83px;height:13.83px;color:#DEDEDC;font-weight:700;letter-spacing:-0.580px;-webkit-text-stroke:.25px currentColor;">Payments</span>
<span class="t" style="left:56.7px;top:512.10px;font-size:14.08px;line-height:14.08px;height:14.08px;color:#0A0A0A;font-weight:700;letter-spacing:-0.580px;word-spacing:-1.02px;-webkit-text-stroke:.25px currentColor;">Payment request</span>
<span class="t" style="left:56.7px;top:556.10px;font-size:13.86px;line-height:13.86px;height:13.86px;color:#DEDEDC;font-weight:700;letter-spacing:-0.580px;-webkit-text-stroke:.25px currentColor;">Accounts</span>
<span class="t" style="left:56.7px;top:599.10px;font-size:14.5px;line-height:14.5px;height:14.5px;color:#DEDEDC;font-weight:700;letter-spacing:-0.578px;word-spacing:-1.02px;-webkit-text-stroke:.25px currentColor;">Wallet statement</span>
<span class="t" style="left:56.7px;top:643.11px;font-size:13.83px;line-height:13.83px;height:13.83px;color:#DEDEDC;font-weight:700;letter-spacing:-0.580px;-webkit-text-stroke:.25px currentColor;">Invoices</span>
<span class="t" style="left:58.7px;top:686.10px;font-size:14.3px;line-height:14.3px;height:14.3px;color:#DEDEDC;font-weight:700;letter-spacing:-0.580px;-webkit-text-stroke:.25px currentColor;">Referral</span>
<span class="t" style="left:55.3px;top:729.10px;font-size:14.13px;line-height:14.13px;height:14.13px;color:#DEDEDC;font-weight:700;letter-spacing:-0.580px;-webkit-text-stroke:.25px currentColor;">Settings</span>
<span class="t" style="left:53.3px;top:772.10px;font-size:14.32px;line-height:14.32px;height:14.32px;color:#DEDEDC;font-weight:700;letter-spacing:-0.580px;-webkit-text-stroke:.25px currentColor;">Support</span>
<span class="t" style="left:57px;top:816.10px;font-size:14.5px;line-height:14.5px;height:14.5px;color:#DEDEDC;font-weight:700;letter-spacing:-0.330px;word-spacing:-1.02px;-webkit-text-stroke:.25px currentColor;">Feedback (4)</span>
<span class="t" style="left:1458.5px;top:134.11px;font-size:14.5px;line-height:14.5px;height:14.5px;color:#fff;font-weight:700;letter-spacing:0.301px;-webkit-text-stroke:.45px currentColor;">14.79</span>
<span class="t" style="left:1502.8px;top:134.11px;font-size:14.14px;line-height:14.14px;height:14.14px;color:#fff;font-weight:700;letter-spacing:-0.580px;-webkit-text-stroke:.45px currentColor;">USD</span>
<span class="t" style="left:1584.2px;top:120.10px;font-size:11.5px;line-height:11.5px;height:11.5px;color:#E8E8EC;letter-spacing:0.303px;-webkit-text-stroke:.25px #E8E8EC;">34</span>
<span class="t" style="left:1642px;top:134.11px;font-size:14.5px;line-height:14.5px;height:14.5px;color:#fff;font-weight:700;letter-spacing:-0.029px;word-spacing:-1.02px;-webkit-text-stroke:.45px currentColor;">NGUYET LAN LE THI (1058998)</span>
<span class="t" style="left:319.5px;top:201.12px;font-size:24.7px;line-height:24.7px;height:24.7px;color:#fff;letter-spacing:-0.590px;">Withdrawal</span>
<span class="t" style="left:343.3px;top:281.10px;font-size:17px;line-height:17px;height:17px;color:#fff;font-weight:700;letter-spacing:0.025px;-webkit-text-stroke:.45px currentColor;">Auto-billing</span>
<span class="t" style="left:343.3px;top:329.11px;font-size:17.4px;line-height:17.4px;height:17.4px;color:#fff;letter-spacing:-0.429px;word-spacing:-1.22px;">Every Monday the system will automatically generate a payment request using</span>
<span class="t" style="left:343.3px;top:353.10px;font-size:17.4px;line-height:17.4px;height:17.4px;color:#fff;letter-spacing:-0.432px;word-spacing:-1.22px;">the payment details you have provided.</span>
<span class="t" style="left:982px;top:342.10px;font-size:15.3px;line-height:15.3px;height:15.3px;color:#141400;font-weight:700;letter-spacing:-0.431px;">Enable</span>
<span class="t" style="left:1142px;top:281.10px;font-size:17px;line-height:17px;height:17px;color:#fff;font-weight:700;letter-spacing:-0.023px;word-spacing:-1.19px;-webkit-text-stroke:.45px currentColor;">Available funds</span>
<span class="t" style="left:1141.2px;top:324.10px;font-size:38px;line-height:38px;height:38px;color:#fff;font-weight:700;transform:scaleX(0.7929);-webkit-text-stroke:.6px #fff;">14.79</span>
<span class="t" style="left:1222.1px;top:342.10px;font-size:16.13px;line-height:16.13px;height:16.13px;color:#fff;letter-spacing:-0.680px;">USD</span>
<span class="t" style="left:1706.3px;top:337.10px;font-size:15.3px;line-height:15.3px;height:15.3px;color:#2C2C38;font-weight:700;letter-spacing:-0.281px;word-spacing:-1.07px;">Request payment</span>
<span class="t" style="left:343.3px;top:475.10px;font-size:17px;line-height:17px;height:17px;color:#fff;font-weight:700;letter-spacing:-0.024px;word-spacing:-1.19px;-webkit-text-stroke:.45px currentColor;">Payment request history</span>
<span class="t" style="left:382.5px;top:521.11px;font-size:15.4px;line-height:15.4px;height:15.4px;color:#C6C6C4;letter-spacing:-0.467px;word-spacing:-1.08px;-webkit-text-stroke:.2px #C6C6C4;">1. Sep 2024 - 1. Dec 2024</span>
<span class="t" style="left:729.5px;top:518.10px;font-size:16.5px;line-height:16.5px;height:16.5px;color:#F2F2F0;letter-spacing:-0.126px;word-spacing:-1.16px;">Select status</span>
<span class="t" style="left:1277.7px;top:522.12px;font-size:15.21px;line-height:15.21px;height:15.21px;color:#D4D4D2;letter-spacing:-0.640px;">Search</span>
<span class="t" style="left:1781.3px;top:520.10px;font-size:16.05px;line-height:16.05px;height:16.05px;color:#fff;letter-spacing:-0.660px;">10</span>
<span class="t" style="left:343.3px;top:578.11px;font-size:14.68px;line-height:14.68px;height:14.68px;color:#fff;letter-spacing:-0.620px;word-spacing:-1.09px;">Showing <b>1-1</b> of <b>1</b> item.</span>
<span class="t" style="left:352.5px;top:621.11px;font-size:17.4px;line-height:17.4px;height:17.4px;color:#fff;font-weight:700;letter-spacing:-0.338px;word-spacing:-1.22px;-webkit-text-stroke:.45px currentColor;">Created at</span>
<span class="t" style="left:585px;top:621.11px;font-size:17.34px;line-height:17.34px;height:17.34px;color:#fff;font-weight:700;letter-spacing:-0.696px;-webkit-text-stroke:.45px currentColor;">Status</span>
<span class="t" style="left:924.3px;top:621.11px;font-size:17.36px;line-height:17.36px;height:17.36px;color:#fff;font-weight:700;letter-spacing:-0.696px;word-spacing:-1.22px;-webkit-text-stroke:.45px currentColor;">Payment method</span>
<span class="t" style="left:1123.3px;top:621.11px;font-size:17.4px;line-height:17.4px;height:17.4px;color:#fff;font-weight:700;letter-spacing:-0.696px;word-spacing:-1.22px;-webkit-text-stroke:.45px currentColor;">Payment account</span>
<span class="t" style="left:1398px;top:621.11px;font-size:17.03px;line-height:17.03px;height:17.03px;color:#fff;font-weight:700;letter-spacing:-0.696px;-webkit-text-stroke:.45px currentColor;">Amount</span>
<span class="t" style="left:1518.8px;top:621.11px;font-size:17.26px;line-height:17.26px;height:17.26px;color:#fff;font-weight:700;letter-spacing:-0.696px;word-spacing:-1.22px;-webkit-text-stroke:.45px currentColor;">Payment Term</span>
<span class="t" style="left:1689.4px;top:621.11px;font-size:17.4px;line-height:17.4px;height:17.4px;color:#fff;font-weight:700;letter-spacing:-0.286px;word-spacing:-1.22px;-webkit-text-stroke:.45px currentColor;">Paid on / Action</span>
<span class="t" style="left:352.5px;top:677.11px;font-size:17.4px;line-height:17.4px;height:17.4px;color:#fff;letter-spacing:-0.260px;word-spacing:-1.22px;">2024-11-28 12:07:00</span>
<span class="t" style="left:617.5px;top:667.10px;font-size:12.86px;line-height:12.86px;height:12.86px;color:#fff;font-weight:700;letter-spacing:-0.540px;">Pending</span>
<span class="t" style="left:585px;top:689.11px;font-size:17.4px;line-height:17.4px;height:17.4px;color:#fff;letter-spacing:-0.208px;word-spacing:-1.22px;"><b style="-webkit-text-stroke:.45px #fff">Approx. payment:</b> 2024-12-30</span>
<span class="t" style="left:924.3px;top:677.11px;font-size:16.35px;line-height:16.35px;height:16.35px;color:#fff;letter-spacing:-0.696px;">PayPal</span>
<span class="t" style="left:1123.5px;top:677.11px;font-size:17.4px;line-height:17.4px;height:17.4px;color:#fff;letter-spacing:-0.631px;">anhthamtu23@gmail.com</span>
<span class="t" style="left:1397.7px;top:677.11px;font-size:17.4px;line-height:17.4px;height:17.4px;color:#fff;letter-spacing:-0.341px;word-spacing:-1.22px;">5.40 USD</span>
<span class="t" style="left:1518.6px;top:677.10px;font-size:17.13px;line-height:17.13px;height:17.13px;color:#fff;letter-spacing:-0.696px;">NET+30</span>
<span class="t" style="left:1703.2px;top:677.10px;font-size:15.39px;line-height:15.39px;height:15.39px;color:#fff;letter-spacing:-0.620px;">Cancel</span>
<span class="t" style="left:315px;top:979.11px;font-size:17.4px;line-height:17.4px;height:17.4px;color:#9A9A98;letter-spacing:-0.357px;word-spacing:-1.22px;">© Adcash 2024</span>
<span class="t" style="left:442.5px;top:979.11px;font-size:17.4px;line-height:17.4px;height:17.4px;color:#9A9A98;letter-spacing:-0.272px;word-spacing:-1.22px;">System time: 08:36:56 (CET)</span>
<span class="t" style="left:111.3px;top:1046.11px;font-size:18.5px;line-height:18.5px;height:18.5px;color:#3A3A3A;letter-spacing:-0.084px;">Type here to search</span>
<span class="t" style="left:1387.5px;top:1048.10px;font-size:17.24px;line-height:17.24px;height:17.24px;color:#fff;letter-spacing:-0.740px;">26°C</span>
<span class="t" style="left:1435.5px;top:1047.11px;font-size:18.5px;line-height:18.5px;height:18.5px;color:#fff;letter-spacing:-0.392px;">Nhiều mây</span>
<span class="t" style="left:1733.8px;top:1049.11px;font-size:14.42px;line-height:14.42px;height:14.42px;color:#fff;letter-spacing:-1.871px;">ENG</span>
<span class="t" style="left:1786.7px;top:1037.11px;font-size:14.5px;line-height:14.5px;height:14.5px;color:#fff;letter-spacing:-0.620px;">2:36 PM</span>
<span class="t" style="left:1779.6px;top:1059.10px;font-size:15.5px;line-height:15.5px;height:15.5px;color:#fff;letter-spacing:-0.346px;">12/1/2024</span>
<div class="b" style="left:570px;top:12px;width:30px;height:28px;background:linear-gradient(90deg, rgba(238,225,186,0), #EEE1BA 90%);"></div>
<div class="b" style="left:868px;top:12px;width:30px;height:28px;background:linear-gradient(90deg, rgba(238,225,186,0), #EEE1BA 90%);"></div>
<div class="b" style="left:598px;top:10px;width:40px;height:32px;background:#EEE1BA;"></div>
<div class="b" style="left:896px;top:10px;width:40px;height:32px;background:#EEE1BA;"></div>
<div class="b" style="left:1859.6px;top:560.6px;width:76px;height:19px;transform:rotate(-90deg);font-size:15.500px;line-height:19px;color:#141400;text-align:center;white-space:pre;letter-spacing:-0.2px;">Need help?</div>
<div class="b" style="left:1837px;top:946px;width:66px;height:66px;background:#EEF52E;border-radius:50%;"></div>
<svg style="left:315.4px;top:20.4px" width="9.2" height="9.2" viewBox="0 0 9.2 9.2" ><path d="M0 0L9.2 9.2M9.2 0L0 9.2" stroke="#1f1f1f" stroke-width="1.9" fill="none"/></svg>
<svg style="left:612.9px;top:20.4px" width="9.2" height="9.2" viewBox="0 0 9.2 9.2" ><path d="M0 0L9.2 9.2M9.2 0L0 9.2" stroke="#3b3727" stroke-width="1.9" fill="none"/></svg>
<svg style="left:909.4px;top:20.4px" width="9.2" height="9.2" viewBox="0 0 9.2 9.2" ><path d="M0 0L9.2 9.2M9.2 0L0 9.2" stroke="#3b3727" stroke-width="1.9" fill="none"/></svg>
<svg style="left:1850px;top:960px" width="40" height="36" viewBox="0 0 40 36"><rect x="8.500" y="3" width="27" height="19" rx="6" fill="none" stroke="#15357E" stroke-width="2.400"/><path d="M2.300 13C2.300 9.700 4.900 7.200 8.200 7.200H25.500C28.800 7.200 31.300 9.700 31.300 13V23C31.300 26.200 28.800 28.700 25.500 28.700H19.500L16.700 33.500L14.300 28.700H8.200C4.900 28.700 2.300 26.200 2.300 23Z" fill="#1B4596"/></svg>
<div class="b" style="left:1599px;top:945px;width:288.2px;height:115.2px;background:rgba(25,87,135,.86);border-radius:30px;"></div>
<svg style="left:0;top:0" width="1920" height="1080" viewBox="0 0 1920 1080"><defs><linearGradient id="gd" gradientUnits="userSpaceOnUse" x1="1646" y1="980" x2="1670" y2="1022"><stop offset="0" stop-color="#56CB95"/><stop offset="1" stop-color="#CDB91C"/></linearGradient><linearGradient id="gm" gradientUnits="userSpaceOnUse" x1="1715" y1="0" x2="1873" y2="0"><stop offset="0" stop-color="#63BE8E"/><stop offset="1" stop-color="#3F8FD2"/></linearGradient><linearGradient id="ga" gradientUnits="userSpaceOnUse" x1="1655" y1="964" x2="1617" y2="1004"><stop offset="0" stop-color="#5A4A7C" stop-opacity=".55"/><stop offset=".45" stop-color="#B04C6C"/><stop offset="1" stop-color="#D9506A"/></linearGradient><linearGradient id="gb" gradientUnits="userSpaceOnUse" x1="1659" y1="1039" x2="1695" y2="1000"><stop offset="0" stop-color="#5A4A7C" stop-opacity=".55"/><stop offset=".45" stop-color="#B04C6C"/><stop offset="1" stop-color="#D9506A"/></linearGradient></defs><polygon points="1668.58,957.13 1669.99,961.41 1674.43,962.22 1670.79,964.89 1671.40,969.36 1667.74,966.72 1663.67,968.68 1665.04,964.38 1661.92,961.12 1666.44,961.10" fill="#DCCB5C" stroke="#DCCB5C" stroke-width=".8" stroke-linejoin="round"/><polygon points="1687.96,966.10 1688.22,970.60 1692.30,972.53 1688.09,974.17 1687.52,978.64 1684.66,975.15 1680.23,975.99 1682.67,972.19 1680.50,968.24 1684.86,969.38" fill="#DCCB5C" stroke="#DCCB5C" stroke-width=".8" stroke-linejoin="round"/><polygon points="1695.70,981.40 1697.48,985.54 1701.98,985.96 1698.59,988.94 1699.58,993.34 1695.70,991.04 1691.82,993.34 1692.81,988.94 1689.42,985.96 1693.92,985.54" fill="#DCCB5C" stroke="#DCCB5C" stroke-width=".8" stroke-linejoin="round"/><polygon points="1621.67,1011.34 1622.56,1015.77 1626.86,1017.11 1622.93,1019.32 1622.98,1023.83 1619.67,1020.77 1615.40,1022.22 1617.28,1018.12 1614.58,1014.50 1619.07,1015.03" fill="#DCCB5C" stroke="#DCCB5C" stroke-width=".8" stroke-linejoin="round"/><polygon points="1629.18,1027.46 1631.53,1031.32 1636.03,1031.11 1633.09,1034.53 1634.68,1038.75 1630.52,1037.01 1627.00,1039.83 1627.37,1035.33 1623.60,1032.85 1627.99,1031.82" fill="#DCCB5C" stroke="#DCCB5C" stroke-width=".8" stroke-linejoin="round"/><polygon points="1649.15,1035.40 1650.18,1039.79 1654.54,1040.98 1650.68,1043.33 1650.89,1047.83 1647.47,1044.89 1643.25,1046.48 1644.99,1042.32 1642.17,1038.80 1646.67,1039.17" fill="#DCCB5C" stroke="#DCCB5C" stroke-width=".8" stroke-linejoin="round"/><path d="M1655.47 964.45L1651.19 964.67L1646.94 965.40L1642.77 966.62L1638.75 968.32L1634.92 970.50L1631.35 973.12L1628.09 976.16L1625.18 979.58L1622.67 983.34L1620.61 987.39L1619.01 991.68L1617.92 996.15L1617.35 1000.75L1617.32 1005.41" stroke="url(#ga)" stroke-width="2.700" fill="none" stroke-linecap="round"/><path d="M1611.300 999.200L1617.200 1005.600L1623.600 1000.200" stroke="#D9506A" stroke-width="2.700" fill="none" stroke-linecap="round" stroke-linejoin="round"/><path d="M1658.72 1039.08L1663.05 1038.68L1667.30 1037.80L1671.43 1036.43L1675.37 1034.60L1679.08 1032.33L1682.51 1029.65L1685.60 1026.59L1688.33 1023.20L1690.65 1019.52L1692.54 1015.60L1693.96 1011.49L1694.90 1007.24L1695.35 1002.90L1695.31 998.55" stroke="url(#gb)" stroke-width="2.700" fill="none" stroke-linecap="round"/><path d="M1689.500 1003.800L1695.300 998.400L1700.600 1004.800" stroke="#D9506A" stroke-width="2.700" fill="none" stroke-linecap="round" stroke-linejoin="round"/><text x="1657.800" y="1019.500" text-anchor="middle" font-family="Liberation Sans,sans-serif" font-weight="700" font-size="53" fill="url(#gd)" stroke="url(#gd)" stroke-width="1.600" stroke-linejoin="round" textLength="27" lengthAdjust="spacingAndGlyphs">$</text><text x="1713.600" y="1010.900" font-family="Liberation Sans,sans-serif" font-weight="700" font-size="31" fill="#DADADA" fill-opacity=".92" textLength="160.500" lengthAdjust="spacingAndGlyphs">MMO4ME</text><clipPath id="cy"><circle cx="1870" cy="979" r="33"/></clipPath><text x="1713.600" y="1010.900" clip-path="url(#cy)" font-family="Liberation Sans,sans-serif" font-weight="700" font-size="31" fill="#FCFDC8" textLength="160.500" lengthAdjust="spacingAndGlyphs">MMO4ME</text></svg>
<svg style="left:1876.3px;top:1052.1px" width="25" height="25" viewBox="0 0 25 25" ><circle cx="12.500" cy="12.500" r="11.600" fill="#2F2F2F" stroke="#9A9A9A" stroke-width="1"/><text x="12.300" y="17.900" text-anchor="middle" font-family="Liberation Sans,sans-serif" font-weight="700" font-size="15.500" fill="#fff" letter-spacing="-.9">22</text></svg>
<span class="t" style="left:1713.8px;top:1019.11px;font-size:14.3px;line-height:14.3px;height:14.3px;color:transparent;font-family:'DejaVu Sans','Liberation Sans',sans-serif;transform:scaleX(1.1495);background:linear-gradient(90deg,#63BE8E,#3F8FD2);-webkit-background-clip:text;background-clip:text;">Make money online</span>
</body></html>
